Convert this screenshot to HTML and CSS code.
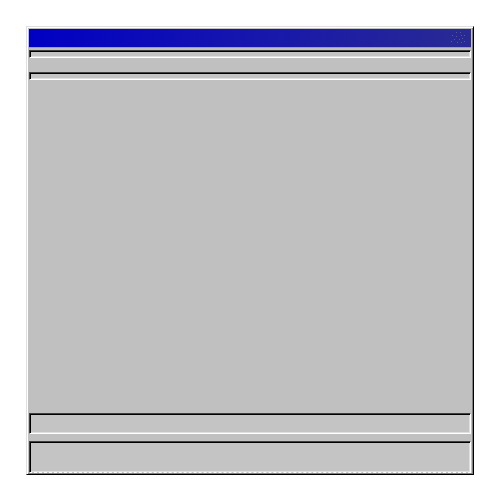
FILE: index.html
```html
<!DOCTYPE html>
<html>
<head>
<meta charset="utf-8">
<link rel="stylesheet" href="styles.css">
</head>
<body>
<div class="window">
  <div class="titlebar">
    <svg class="grip" width="14" height="12" viewBox="0 0 14 12">
      <g fill="#5c5c78">
        <rect x="5" y="0" width="1" height="1"/>
        <rect x="9" y="0" width="1" height="1"/>
        <rect x="1" y="3" width="1" height="1"/>
        <rect x="5" y="4" width="1" height="1"/>
        <rect x="10" y="3" width="1" height="1"/>
        <rect x="13" y="3" width="1" height="1"/>
        <rect x="3" y="7" width="1" height="1"/>
        <rect x="8" y="7" width="1" height="1"/>
        <rect x="11" y="6" width="1" height="1"/>
        <rect x="0" y="9" width="1" height="1"/>
        <rect x="6" y="10" width="1" height="1"/>
        <rect x="10" y="10" width="1" height="1"/>
        <rect x="13" y="9" width="1" height="1"/>
      </g>
    </svg>
  </div>
  <div class="field thin first"></div>
  <div class="field thin second"></div>
  <div class="body-area"></div>
  <div class="field box1"></div>
  <div class="field box2"></div>
</div>
</body>
</html>
```

FILE: styles.css
```css
html, body {
  margin: 0;
  padding: 0;
  background: #ffffff;
}

body {
  padding: 26px 0 0 26px;
  font-family: "Liberation Sans", sans-serif;
}

.window {
  width: 442px;
  height: 444px;
  padding: 2px 2px 1px 2px;
  background: #c0c0c0;
  border: 1px solid;
  border-color: #dfdfdf #000000 #000000 #dfdfdf;
  box-shadow: inset 1px 1px 0 #ffffff, inset -1px -1px 0 #808080;
  display: flex;
  flex-direction: column;
}

.titlebar {
  height: 18px;
  background: linear-gradient(to right, #0000c4 0%, #1414b0 45%, #2a2a94 100%);
  display: flex;
  align-items: center;
  justify-content: flex-end;
  padding-right: 6px;
  border-bottom: 1px solid #a0a0a0;
}

.grip {
  display: block;
}

.field {
  border: 1px solid;
  border-color: #404040 #ffffff #ffffff #404040;
  box-shadow: inset 1px 1px 0 #000000, inset -1px -1px 0 #dfdfdf;
  background: #c4c4c4;
}

.thin {
  height: 6px;
}

.first {
  margin-top: 2px;
}

.second {
  margin-top: 14px;
}

.body-area {
  flex: 1;
}

.box1 {
  height: 19px;
}

.box2 {
  height: 30px;
  margin-top: 7px;
  border-bottom-style: dashed;
}
```
